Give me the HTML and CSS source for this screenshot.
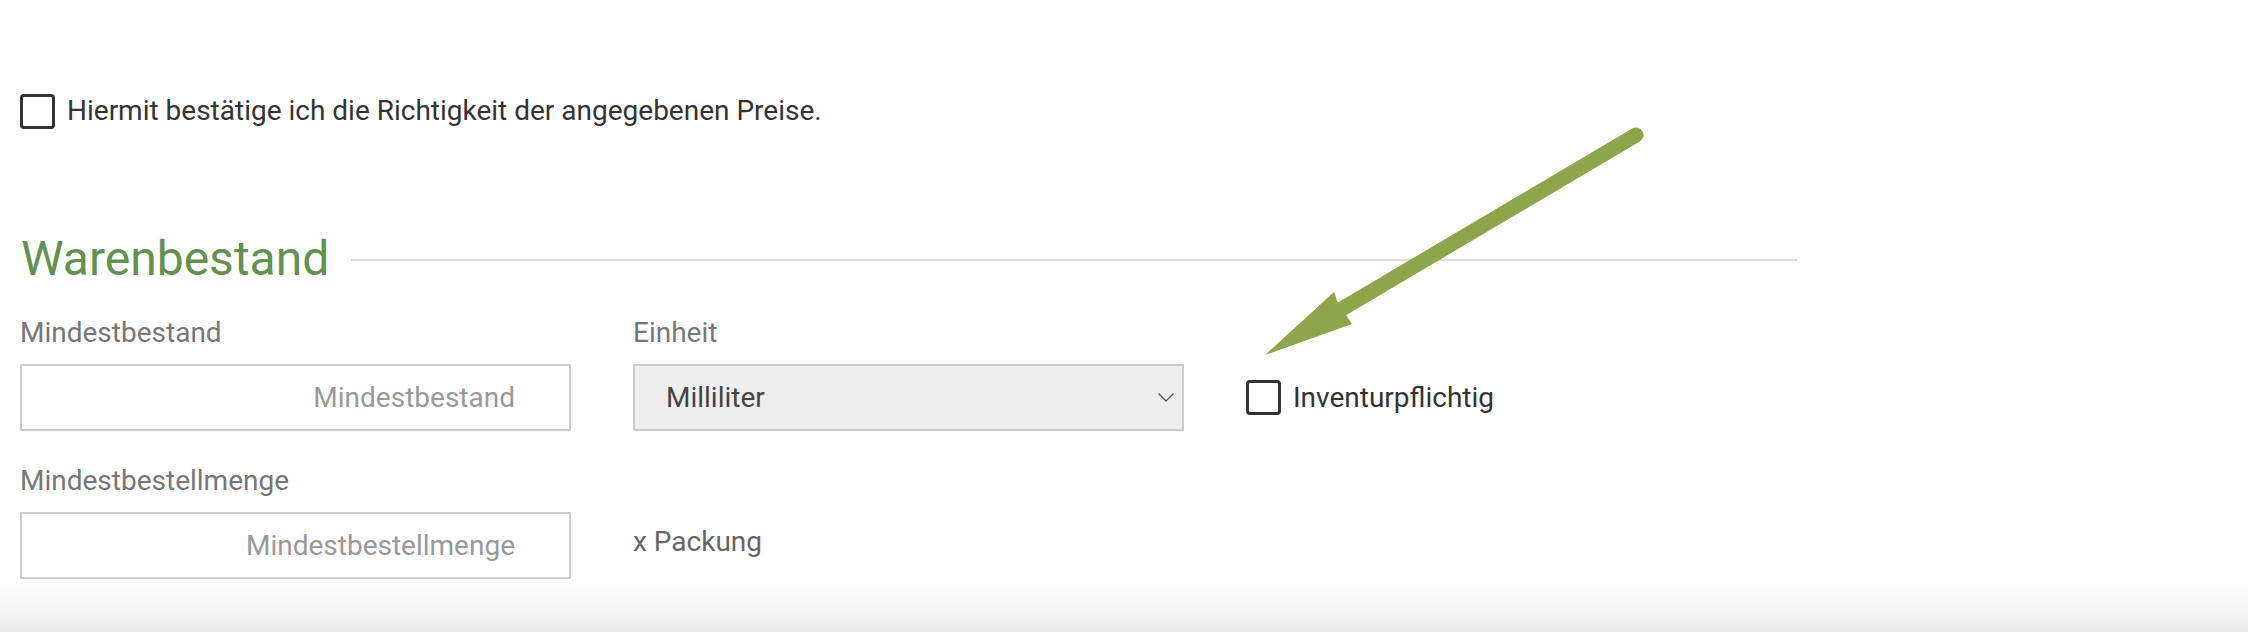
FILE: index.html
```html
<!DOCTYPE html>
<html lang="de">
<head>
<meta charset="utf-8">
<title>Warenbestand</title>
<link rel="stylesheet" href="styles.css">
</head>
<body>
<div class="page">
  <label class="check confirm">
    <span class="box"></span>
    <span class="check-text">Hiermit bestätige ich die Richtigkeit der angegebenen Preise.</span>
  </label>

  <div class="section-head">
    <h2 class="section-title">Warenbestand</h2>
    <span class="rule"></span>
  </div>

  <div class="form-grid">
    <div class="field">
      <span class="label">Mindestbestand</span>
      <div class="input"><span class="placeholder">Mindestbestand</span></div>
    </div>
    <div class="field">
      <span class="label">Einheit</span>
      <div class="select">
        <span class="select-value">Milliliter</span>
        <svg class="chevron" width="16" height="9" viewBox="0 0 16 9"><path d="M0.5 0.5 L8 8 L15.5 0.5" fill="none" stroke="#555" stroke-width="1.3"/></svg>
      </div>
    </div>
    <label class="check inventur">
      <span class="box"></span>
      <span class="check-text">Inventurpflichtig</span>
    </label>

    <div class="field">
      <span class="label">Mindestbestellmenge</span>
      <div class="input"><span class="placeholder">Mindestbestellmenge</span></div>
    </div>
    <div class="unit">x Packung</div>
  </div>

  <svg class="arrow" width="2248" height="632" viewBox="0 0 2248 632">
    <line x1="1636" y1="135" x2="1340" y2="310" stroke="#8da64b" stroke-width="15" stroke-linecap="round"/>
    <path d="M1265 355 L1334 292 L1338 303 L1352 324 Z" fill="#8da64b"/>
  </svg>
</div>
<div class="bottom-shade"></div>
</body>
</html>
```

FILE: styles.css
```css
html, body {
  margin: 0;
  padding: 0;
  background: #fff;
}
body {
  font-family: Roboto, "Liberation Sans", Arial, sans-serif;
  width: 2248px;
  height: 632px;
  overflow: hidden;
  position: relative;
}
.page {
  padding: 93px 0 0 20px;
}
.check {
  display: flex;
  align-items: center;
  gap: 12px;
}
.box {
  width: 35px;
  height: 35px;
  box-sizing: border-box;
  border: 3px solid #333;
  border-radius: 4px;
  flex: none;
}
.check-text {
  color: #333;
  font-size: 28px;
  line-height: 36px;
}
.section-head {
  display: flex;
  align-items: flex-start;
  margin-top: 104px;
  width: 1777px;
  height: 52px;
}
.section-title {
  margin: 0 0 0 1px;
  font-weight: 400;
  font-size: 48px;
  line-height: 52px;
  color: #629150;
}
.rule {
  flex: 1;
  height: 2px;
  background: #ddd;
  margin-left: 22px;
  margin-top: 26px;
}
.form-grid {
  display: grid;
  grid-template-columns: 551px 551px auto;
  column-gap: 62px;
  row-gap: 34px;
  margin-top: 32px;
}
.field {
  display: flex;
  flex-direction: column;
  gap: 15px;
}
.label {
  font-size: 28px;
  line-height: 32px;
  color: #777;
}
.input, .select {
  box-sizing: border-box;
  height: 67px;
  border: 2px solid #ccc;
  display: flex;
  align-items: center;
  font-size: 28px;
}
.input {
  justify-content: flex-end;
  padding-right: 54px;
  background: #fff;
}
.placeholder {
  color: #999;
}
.select {
  background: #eee;
  padding: 0 8px 0 31px;
  justify-content: space-between;
}
.select-value {
  color: #444;
}
.chevron {
  display: block;
}
.inventur {
  align-self: end;
  height: 67px;
}
.unit {
  align-self: end;
  height: 67px;
  display: flex;
  align-items: center;
  font-size: 28px;
  color: #666;
  padding-bottom: 8px;
  box-sizing: border-box;
}
.arrow {
  position: absolute;
  left: 0;
  top: 0;
  pointer-events: none;
}
.bottom-shade {
  position: absolute;
  left: 0;
  right: 0;
  bottom: 0;
  height: 50px;
  background: linear-gradient(to bottom, rgba(236,236,236,0), #ececec);
}
```
